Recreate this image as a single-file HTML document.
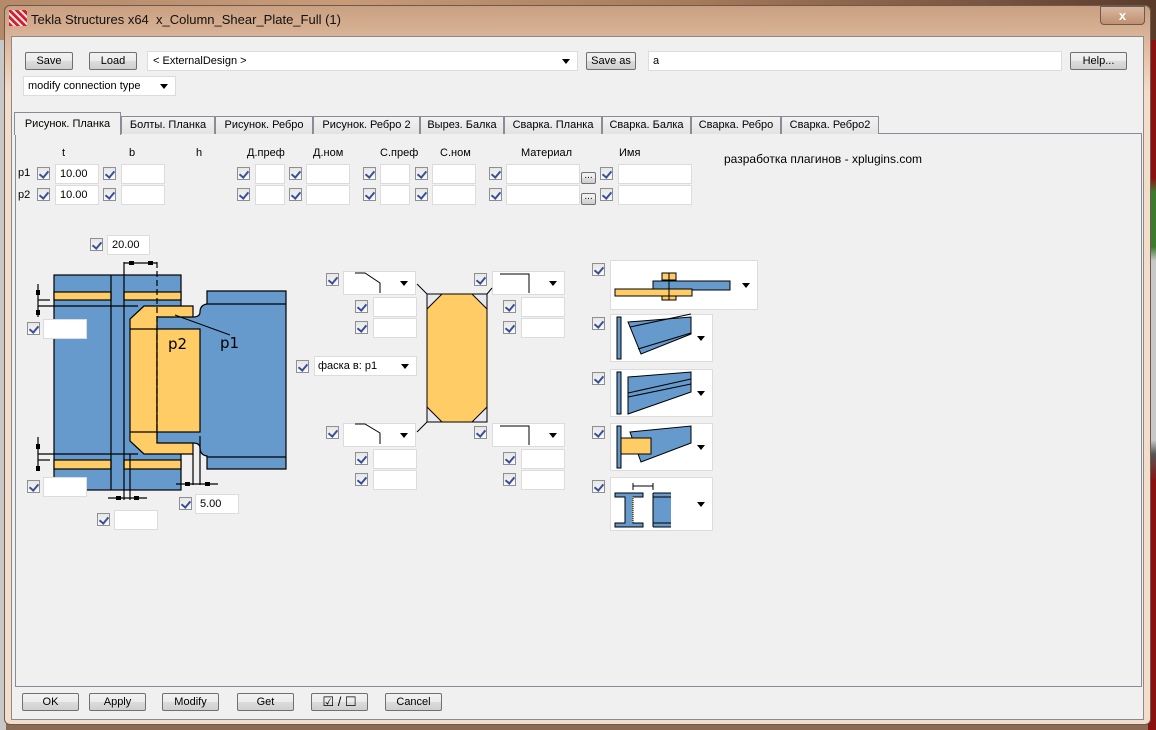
<!DOCTYPE html>
<html><head><meta charset="utf-8"><style>
*{box-sizing:border-box;margin:0;padding:0}
body{width:1156px;height:730px;overflow:hidden;position:relative;background:#8a6a55;font-family:"Liberation Sans","DejaVu Sans",sans-serif;font-size:11px;color:#000}
.a{position:absolute}
.cb{position:absolute;z-index:3;width:13px;height:13px;border:1px solid #8e8f8f;background:linear-gradient(#e6e6e6,#fafafa)}
.cb:after{content:"";position:absolute;left:3px;top:1px;width:4px;height:7px;border:solid #3a4f9a;border-width:0 2px 2px 0;transform:rotate(40deg)}
.in{position:absolute;z-index:3;background:#fff;border:1px solid #dcdcdc;height:20px;padding:3px 4px;font-size:11px}
.btn{position:absolute;height:18px;border:1px solid #707070;border-radius:2px;background:linear-gradient(#f2f2f2,#ebebeb 50%,#dcdcdc 51%,#cfcfcf);text-align:center;font-size:11px;line-height:16px}
.dd{position:absolute;background:#fff;border:1px solid #dcdcdc}
.dd:after{content:"";position:absolute;right:7px;top:50%;margin-top:-2px;border:4px solid transparent;border-top:5px solid #000;border-bottom:0}
.tab{position:absolute;top:116px;height:18px;border:1px solid #898c95;border-bottom:0;background:linear-gradient(#f2f2f2,#e3e3e3);font-size:11px;text-align:center;line-height:16px}
.lbl{position:absolute;font-size:11px}
svg.a{z-index:2}
.arr{position:absolute;z-index:4;width:0;height:0;border:4px solid transparent;border-top:5px solid #000;border-bottom:0}
</style></head><body>
<div class="a" style="left:0;top:0;width:1156px;height:40px;background:linear-gradient(90deg,#b58a6a,#c89a78 30%,#a67a5a 60%,#7a5540 85%,#5a3b2a)"></div>
<div class="a" style="left:1148px;top:40px;width:8px;height:690px;background:linear-gradient(#8b1010,#8b1010 20%,#3e7a2e 22%,#3e7a2e 30%,#c8c8c8 32%,#c8c8c8 58%,#555 60%,#8b1010 64%,#8b1010)"></div>
<div class="a" style="left:0;top:40px;width:6px;height:690px;background:#c8c8c8"></div>
<div class="a" style="left:4px;top:5px;width:1147px;height:720px;border:1px solid #6b5a50;border-radius:6px;background:linear-gradient(#c99f80,#e9c7ad 8%,#f4dccb 12%,#f4dccb)"></div>
<div class="a" style="left:9px;top:10px;width:18px;height:16px;background:repeating-linear-gradient(45deg,#d02030 0 3px,#f6e0e0 3px 5px)"></div>
<div class="a" style="left:31px;top:12px;font-size:13px;color:#111">Tekla Structures x64&nbsp; x_Column_Shear_Plate_Full (1)</div>
<div class="a" style="left:1100px;top:6px;width:45px;height:19px;border:1px solid #6a5a50;border-radius:0 0 4px 4px;background:linear-gradient(#d8b8a0,#c09070);color:#fff;text-align:center;font-size:13px;font-weight:bold;line-height:17px">x</div>
<div class="a" style="left:11px;top:36px;width:1133px;height:684px;background:#f0f0f0;border:1px solid #8a8a8a"></div>

<div class="btn" style="left:25px;top:52px;width:48px">Save</div>
<div class="btn" style="left:89px;top:52px;width:48px">Load</div>
<div class="dd" style="left:147px;top:51px;width:431px;height:20px;padding:3px 5px">&lt; ExternalDesign &gt;</div>
<div class="btn" style="left:586px;top:52px;width:50px">Save as</div>
<div class="in" style="left:648px;top:51px;width:414px">a</div>
<div class="btn" style="left:1070px;top:52px;width:57px">Help...</div>
<div class="dd" style="left:23px;top:76px;width:153px;height:20px;padding:3px 4px">modify connection type</div>

<div class="a" style="left:15px;top:133px;width:1127px;height:554px;border:1px solid #898c95;background:#f0f0f0"></div>
<div class="tab" style="left:121px;width:94px">Болты. Планка</div>
<div class="tab" style="left:215px;width:98px">Рисунок. Ребро</div>
<div class="tab" style="left:313px;width:107px">Рисунок. Ребро 2</div>
<div class="tab" style="left:420px;width:84px">Вырез. Балка</div>
<div class="tab" style="left:504px;width:98px">Сварка. Планка</div>
<div class="tab" style="left:602px;width:89px">Сварка. Балка</div>
<div class="tab" style="left:691px;width:90px">Сварка. Ребро</div>
<div class="tab" style="left:781px;width:98px">Сварка. Ребро2</div>
<div class="tab" style="left:14px;top:112px;width:107px;height:23px;background:#f0f0f0;line-height:22px">Рисунок. Планка</div>

<div class="lbl" style="left:62px;top:147px">t</div>
<div class="lbl" style="left:129px;top:147px">b</div>
<div class="lbl" style="left:196px;top:147px">h</div>
<div class="lbl" style="left:247px;top:147px">Д.преф</div>
<div class="lbl" style="left:313px;top:147px">Д.ном</div>
<div class="lbl" style="left:380px;top:147px">С.преф</div>
<div class="lbl" style="left:440px;top:147px">С.ном</div>
<div class="lbl" style="left:521px;top:147px">Материал</div>
<div class="lbl" style="left:619px;top:147px">Имя</div>
<div class="lbl" style="left:724px;top:152px;font-size:12px">разработка плагинов - xplugins.com</div>

<div class="lbl" style="left:18px;top:167px">p1</div>
<div class="lbl" style="left:18px;top:189px">p2</div>
<div class="cb" style="left:37px;top:167px"></div><div class="in" style="left:55px;top:164px;width:44px">10.00</div>
<div class="cb" style="left:103px;top:167px"></div><div class="in" style="left:121px;top:164px;width:44px"></div>
<div class="cb" style="left:237px;top:167px"></div><div class="in" style="left:255px;top:164px;width:30px"></div>
<div class="cb" style="left:289px;top:167px"></div><div class="in" style="left:306px;top:164px;width:44px"></div>
<div class="cb" style="left:363px;top:167px"></div><div class="in" style="left:380px;top:164px;width:30px"></div>
<div class="cb" style="left:415px;top:167px"></div><div class="in" style="left:432px;top:164px;width:44px"></div>
<div class="cb" style="left:489px;top:167px"></div><div class="in" style="left:506px;top:164px;width:74px"></div>
<div class="btn" style="left:581px;top:172px;width:15px;height:12px;line-height:6px;font-size:10px">...</div>
<div class="cb" style="left:600px;top:167px"></div><div class="in" style="left:618px;top:164px;width:74px"></div>
<div class="cb" style="left:37px;top:188px"></div><div class="in" style="left:55px;top:185px;width:44px">10.00</div>
<div class="cb" style="left:103px;top:188px"></div><div class="in" style="left:121px;top:185px;width:44px"></div>
<div class="cb" style="left:237px;top:188px"></div><div class="in" style="left:255px;top:185px;width:30px"></div>
<div class="cb" style="left:289px;top:188px"></div><div class="in" style="left:306px;top:185px;width:44px"></div>
<div class="cb" style="left:363px;top:188px"></div><div class="in" style="left:380px;top:185px;width:30px"></div>
<div class="cb" style="left:415px;top:188px"></div><div class="in" style="left:432px;top:185px;width:44px"></div>
<div class="cb" style="left:489px;top:188px"></div><div class="in" style="left:506px;top:185px;width:74px"></div>
<div class="btn" style="left:581px;top:193px;width:15px;height:12px;line-height:6px;font-size:10px">...</div>
<div class="cb" style="left:600px;top:188px"></div><div class="in" style="left:618px;top:185px;width:74px"></div>

<svg class="a" style="left:0;top:230px" width="300" height="300" viewBox="0 230 300 300">
<g stroke="#000" stroke-width="1.2">
<rect x="54" y="275" width="127" height="215" fill="#6699cc"/>
<rect x="54" y="292" width="57" height="8" fill="#ffcc66"/>
<rect x="124" y="292" width="57" height="8" fill="#ffcc66"/>
<rect x="54" y="460" width="57" height="9" fill="#ffcc66"/>
<rect x="124" y="460" width="57" height="9" fill="#ffcc66"/>
<line x1="111" y1="275" x2="111" y2="490"/><line x1="124" y1="275" x2="124" y2="490"/>
<polygon points="144,306 193,306 193,454 144,454 130,441 130,319" fill="#ffcc66"/>
<path d="M157,317 L193,317 Q200,317 200,312 Q200,305 207,304 L207,291 L286,291 L286,469 L207,469 L207,456 Q200,455 200,448 Q200,443 193,443 L157,443 Z" fill="#6699cc"/>
<rect x="157" y="329" width="43" height="103" fill="#ffcc66"/>
<line x1="130" y1="329" x2="157" y2="329"/><line x1="130" y1="432" x2="157" y2="432"/>
<line x1="207" y1="304" x2="286" y2="304"/><line x1="207" y1="457" x2="286" y2="457"/>
<line x1="157" y1="262" x2="157" y2="443" stroke-dasharray="6,3"/>
<line x1="124" y1="262" x2="124" y2="275"/>
<line x1="124" y1="263" x2="157" y2="263"/>
<line x1="38" y1="306" x2="138" y2="306"/><line x1="38" y1="300" x2="50" y2="300"/>
<line x1="38" y1="284" x2="38" y2="317"/>
<line x1="38" y1="454" x2="138" y2="454"/><line x1="38" y1="460" x2="50" y2="460"/>
<line x1="38" y1="437" x2="38" y2="470"/>
<line x1="124" y1="490" x2="124" y2="500"/><line x1="130" y1="454" x2="130" y2="500"/>
<line x1="108" y1="498" x2="147" y2="498"/>
<line x1="193" y1="454" x2="193" y2="485"/><line x1="200" y1="436" x2="200" y2="485"/>
<line x1="176" y1="484" x2="218" y2="484"/>
<line x1="175" y1="315" x2="230" y2="335" stroke-width="1"/>
</g>
<g fill="#000"><rect x="129" y="261" width="5" height="4"/><rect x="148" y="261" width="5" height="4"/>
<rect x="36" y="290" width="4" height="5"/><rect x="36" y="310" width="4" height="5"/>
<rect x="36" y="444" width="4" height="5"/><rect x="36" y="466" width="4" height="5"/>
<rect x="116" y="496" width="5" height="4"/><rect x="134" y="496" width="5" height="4"/>
<rect x="185" y="482" width="5" height="4"/><rect x="205" y="482" width="5" height="4"/></g>
<text x="168" y="349" font-size="15" font-family="DejaVu Sans,sans-serif">p2</text>
<text x="220" y="348" font-size="15" font-family="DejaVu Sans,sans-serif">p1</text>
</svg>
<div class="cb" style="left:90px;top:238px"></div><div class="in" style="left:107px;top:235px;width:43px">20.00</div>
<div class="cb" style="left:27px;top:322px"></div><div class="in" style="left:43px;top:319px;width:44px"></div>
<div class="cb" style="left:27px;top:480px"></div><div class="in" style="left:43px;top:477px;width:44px"></div>
<div class="cb" style="left:179px;top:497px"></div><div class="in" style="left:195px;top:494px;width:44px">5.00</div>
<div class="cb" style="left:97px;top:513px"></div><div class="in" style="left:114px;top:510px;width:44px"></div>

<svg class="a" style="left:300px;top:260px" width="280" height="240" viewBox="300 260 280 240">
<g stroke="#000" fill="none" stroke-width="1">
<rect x="427" y="294" width="60" height="128" fill="#e8e8ee"/>
<polygon points="442,294 472,294 487,309 487,407 472,422 442,422 427,407 427,309" fill="#ffcc66"/>
<line x1="417" y1="284" x2="427" y2="294"/><line x1="487" y1="294" x2="492" y2="288"/>
<line x1="417" y1="432" x2="427" y2="422"/>
<path d="M355,273 L365,273 L380,283 L380,293"/><path d="M355,424 L365,424 L380,433 L380,444"/>
<path d="M500,274 L529,274 L529,293"/><path d="M500,426 L529,426 L529,445"/>
</g></svg>
<div class="cb" style="left:326px;top:273px"></div><div class="dd" style="left:343px;top:271px;width:73px;height:24px"></div>
<div class="cb" style="left:355px;top:300px"></div><div class="in" style="left:373px;top:297px;width:44px"></div>
<div class="cb" style="left:355px;top:321px"></div><div class="in" style="left:373px;top:318px;width:44px"></div>
<div class="cb" style="left:474px;top:273px"></div><div class="dd" style="left:492px;top:271px;width:73px;height:24px"></div>
<div class="cb" style="left:503px;top:300px"></div><div class="in" style="left:521px;top:297px;width:44px"></div>
<div class="cb" style="left:503px;top:321px"></div><div class="in" style="left:521px;top:318px;width:44px"></div>
<div class="cb" style="left:296px;top:360px"></div><div class="dd" style="left:314px;top:356px;width:103px;height:20px;padding:3px 3px">фаска в: p1</div>
<div class="cb" style="left:326px;top:426px"></div><div class="dd" style="left:343px;top:423px;width:73px;height:24px"></div>
<div class="cb" style="left:355px;top:452px"></div><div class="in" style="left:373px;top:449px;width:44px"></div>
<div class="cb" style="left:355px;top:473px"></div><div class="in" style="left:373px;top:470px;width:44px"></div>
<div class="cb" style="left:474px;top:426px"></div><div class="dd" style="left:492px;top:423px;width:73px;height:24px"></div>
<div class="cb" style="left:503px;top:452px"></div><div class="in" style="left:521px;top:449px;width:44px"></div>
<div class="cb" style="left:503px;top:473px"></div><div class="in" style="left:521px;top:470px;width:44px"></div>

<div class="cb" style="left:592px;top:263px"></div>
<div class="cb" style="left:592px;top:317px"></div>
<div class="cb" style="left:592px;top:372px"></div>
<div class="cb" style="left:592px;top:426px"></div>
<div class="cb" style="left:592px;top:480px"></div>
<div class="dd" style="left:610px;top:260px;width:148px;height:50px"></div>
<div class="dd" style="left:610px;top:314px;width:103px;height:48px"></div>
<div class="dd" style="left:610px;top:369px;width:103px;height:48px"></div>
<div class="dd" style="left:610px;top:423px;width:103px;height:48px"></div>
<div class="dd" style="left:610px;top:477px;width:103px;height:54px"></div>
<svg class="a" style="left:580px;top:250px" width="200" height="290" viewBox="580 250 200 290">
<g stroke="#000" stroke-width="1">
<rect x="662" y="273" width="14" height="7" fill="#ffcc66"/><rect x="662" y="292" width="14" height="8" fill="#ffcc66"/>
<rect x="653" y="281" width="77" height="9" fill="#6699cc"/>
<rect x="615" y="289" width="77" height="7" fill="#ffcc66"/>
<line x1="669" y1="273" x2="669" y2="300"/>
<rect x="617" y="317" width="4" height="42" fill="#6699cc"/>
<polygon points="628,322 691,317 691,334 641,354" fill="#6699cc"/>
<line x1="630" y1="327" x2="691" y2="314" fill="none"/><line x1="638" y1="349" x2="691" y2="333"/>
<rect x="617" y="372" width="4" height="42" fill="#6699cc"/>
<polygon points="628,377 691,372 691,392 628,414" fill="#6699cc"/>
<line x1="628" y1="393" x2="691" y2="379"/><line x1="628" y1="397" x2="691" y2="384"/>
<rect x="617" y="426" width="4" height="42" fill="#6699cc"/>
<polygon points="630,432 691,426 691,443 641,462" fill="#6699cc"/>
<rect x="621" y="438" width="30" height="16" fill="#ffcc66"/>
<path d="M615,493 h28 v4 h-10 v26 h10 v4 h-28 v-4 h10 v-26 h-10 z" fill="#6699cc"/>
<line x1="633" y1="497" x2="633" y2="523" stroke="#ffcc66" stroke-dasharray="1,1"/>
<rect x="653" y="493" width="18" height="34" fill="#6699cc" stroke-width="0"/>
<line x1="653" y1="493" x2="653" y2="527"/><line x1="653" y1="493" x2="671" y2="493"/><line x1="653" y1="497" x2="671" y2="497"/><line x1="653" y1="523" x2="671" y2="523"/><line x1="653" y1="527" x2="671" y2="527"/>
<line x1="633" y1="486" x2="653" y2="486"/><line x1="633" y1="483" x2="633" y2="490"/><line x1="653" y1="483" x2="653" y2="490"/>
</g></svg>

<div class="btn" style="left:22px;top:693px;width:57px">OK</div>
<div class="btn" style="left:89px;top:693px;width:57px">Apply</div>
<div class="btn" style="left:162px;top:693px;width:57px">Modify</div>
<div class="btn" style="left:237px;top:693px;width:57px">Get</div>
<div class="btn" style="left:311px;top:693px;width:57px;font-size:13px;line-height:15px">☑ / ☐</div>
<div class="btn" style="left:385px;top:693px;width:57px">Cancel</div>
</body></html>
